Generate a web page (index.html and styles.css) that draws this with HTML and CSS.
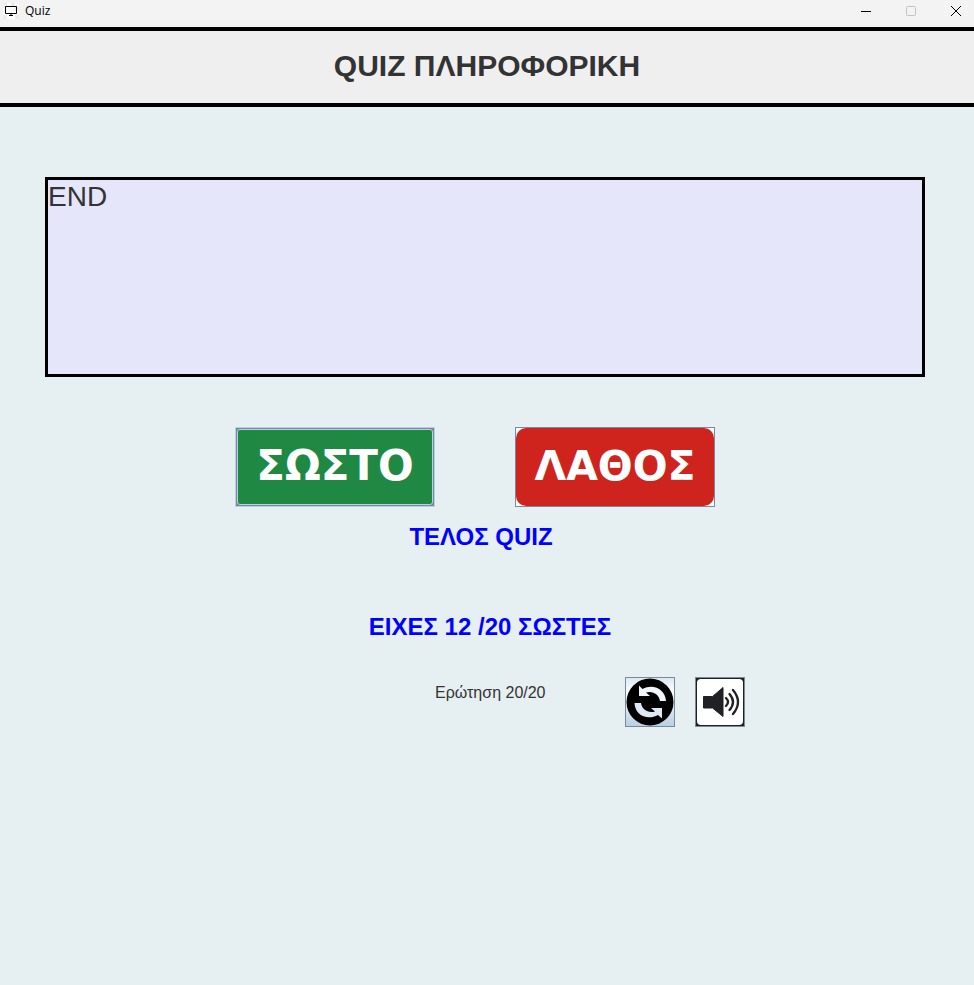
FILE: index.html
```html
<!DOCTYPE html>
<html lang="el">
<head>
<meta charset="utf-8">
<meta name="viewport" content="width=device-width, initial-scale=1">
<title>Quiz</title>
<link rel="stylesheet" href="styles.css">
</head>
<body>
<div class="titlebar">
  <svg class="app-icon" width="16" height="16" viewBox="0 0 16 16" aria-hidden="true">
    <path fill="#fff" d="M0 0h16v16H0z"/>
    <path fill="#ececec" d="M0 0h4v4H0zM8 0h4v4H8zM12 4h4v4h-4zM0 12h4v4H0zM12 12h4v4h-4z"/>
    <path fill="none" stroke="#000" d="M2.500 3.500h11v7h-11zM8 11v2M6 12.500h4"/>
  </svg>
  <span class="app-name">Quiz</span>
  <div class="window-controls">
    <button type="button" aria-label="Minimize"><svg width="12" height="12" viewBox="0 0 12 12"><path d="M1 6.500h10"/></svg></button>
    <button type="button" aria-label="Maximize" disabled><svg width="12" height="12" viewBox="0 0 12 12"><rect x="1.500" y="1.500" width="9" height="9" rx="1"/></svg></button>
    <button type="button" aria-label="Close"><svg width="12" height="12" viewBox="0 0 12 12"><path d="M1 1l10 10M11 1L1 11"/></svg></button>
  </div>
</div>
<header class="banner"><h1>QUIZ ΠΛΗΡΟΦΟΡΙΚΗ</h1></header>
<main class="quiz">
  <textarea class="question" aria-label="Ερώτηση" readonly>END</textarea>
  <div class="answers">
    <button type="button" class="answer answer-true"><span>ΣΩΣΤΟ</span></button>
    <button type="button" class="answer answer-false"><span>ΛΑΘΟΣ</span></button>
  </div>
  <p class="message message-end">ΤΕΛΟΣ QUIZ</p>
  <p class="message message-score">ΕΙΧΕΣ 12 /20 ΣΩΣΤΕΣ</p>
  <div class="footer">
    <span class="progress">Ερώτηση 20/20</span>
    <button type="button" class="tool tool-restart" aria-label="Restart">
      <svg width="48" height="48" viewBox="0 0 48 48">
        <circle cx="24" cy="24" r="23.500" fill="#000"/>
        <path fill="#f1f5fa" d="M13 7.500V18h11l-4-3.500c7-2 13 2 14 8.500h6C39.500 11 27 5 16.500 11z"/>
        <path fill="#dfe9f5" d="M36 40.500V30H25l4 3.500c-7 2-13-2-14-8.500H8.500C9 37 21 43 32 37z"/>
      </svg>
    </button>
    <button type="button" class="tool tool-sound" aria-label="Sound">
      <svg width="48" height="48" viewBox="0 0 48 48">
        <path fill="#202124" d="M0 0h48v48H0z"/>
        <rect x="1" y="1" width="46" height="46" rx="4" fill="#fff"/>
        <path fill="#202124" stroke="#202124" stroke-linejoin="round" d="M7.500 18.500h9L27 9.500v29L16.500 30h-9z"/>
        <path fill="none" stroke="#202124" stroke-width="2.300" stroke-linecap="round" d="M30 20q4 4 0 8M33.500 16q7 8 0 16M37 12q10 12 0 24"/>
      </svg>
    </button>
  </div>
</main>
</body>
</html>
```

FILE: styles.css
```css
* {
  box-sizing: border-box;
}

body {
  margin: 0;
  min-height: 100vh;
  background: #e6eff1;
  color: #333;
  font-family: "Liberation Sans", Arial, sans-serif;
}

button {
  padding: 0;
  font: inherit;
}

svg {
  display: block;
}

.titlebar {
  display: flex;
  align-items: center;
  height: 27px;
  padding: 0 0 5px 3px;
  background: #f3f3f3;
}

.app-name {
  margin-left: 6px;
  color: #000;
  font: 12px/16px "Open Sans", sans-serif;
}

.window-controls {
  display: flex;
  gap: 9px;
  margin-left: auto;
}

.window-controls button {
  display: grid;
  place-items: center;
  width: 36px;
  height: 22px;
  border: 0;
  background: none;
}

.window-controls svg {
  fill: none;
  stroke: #000;
}

.window-controls button:disabled svg {
  stroke: #c2c2c2;
}

.banner {
  display: grid;
  place-items: center;
  height: 80px;
  padding-bottom: 2px;
  border: solid #000;
  border-width: 4px 0;
  background: #efefef;
}

h1 {
  margin: 0;
  font-size: 30px;
  line-height: 36px;
}

.quiz {
  padding: 70px 49px 0 45px;
}

.question {
  display: block;
  width: 100%;
  height: 200px;
  padding: 0;
  border: 3px solid #000;
  background: #e6e6fa;
  color: #333;
  font: 28px/33px "Liberation Sans", Arial, sans-serif;
  resize: none;
  outline: 0;
}

.answers {
  display: flex;
  justify-content: center;
  gap: 80px;
  margin-top: 50px;
  padding-right: 20px;
}

.answer {
  display: grid;
  width: 200px;
  height: 80px;
  border: 1px solid #7a8a99;
  background: #fff;
  color: #fff;
  font: bold 41px/48px "DejaVu Sans", sans-serif;
}

.answer span {
  display: grid;
  place-items: center;
  padding-bottom: 2px;
}

.answer-true {
  padding: 1px;
  border-color: #b8cfe5;
  background: #7a8a99;
  font-size: 42px;
}

.answer-true span {
  border: 1px solid #b8cfe5;
  border-radius: 3px;
  background: #1f8944;
}

.answer-false span {
  border-radius: 10px;
  background: #cf231e;
}

.message {
  margin: 0;
  color: #00f;
  font-size: 24px;
  font-weight: bold;
  line-height: 30px;
  text-align: center;
}

.message-end {
  margin-top: 15px;
  padding-right: 8px;
}

.message-score {
  margin-top: 60px;
  padding-left: 10px;
}

.footer {
  display: flex;
  justify-content: center;
  gap: 20px;
  margin-top: 35px;
  padding-left: 210px;
}

.progress {
  width: 170px;
  font-size: 16px;
  line-height: 32px;
}

.tool {
  width: 50px;
  height: 50px;
  border: 1px solid #7a8a99;
}

.tool-restart {
  background: linear-gradient(#dde8f3, #fff 30%, #b8cfe5);
}

.tool-sound {
  background: #fff;
}
```
